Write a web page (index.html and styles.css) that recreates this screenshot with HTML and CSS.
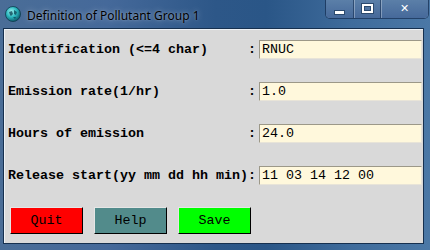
FILE: index.html
```html
<!DOCTYPE html>
<html lang="en">
<head>
<meta charset="UTF-8" />
<title>Definition of Pollutant Group 1</title>
<link rel="stylesheet" href="styles.css">
</head>
<body>

<div class="window">
  <div class="titlebar">
    <svg class="app-icon" width="16" height="16" viewBox="0 0 16 16">
      <defs>
        <radialGradient id="g" cx="0.4" cy="0.35" r="0.7">
          <stop offset="0" stop-color="#9ff3f0"/>
          <stop offset="0.5" stop-color="#2bb7be"/>
          <stop offset="1" stop-color="#0b4f62"/>
        </radialGradient>
      </defs>
      <circle cx="8" cy="8" r="7.5" fill="url(#g)" stroke="#0d3b4c" stroke-width="0.8"/>
      <path d="M4 6 L7 5 L8 8 L6 10 L5 9 Z M9 4 L12 6 L11 9 L9 8 Z M8 11 L11 11 L10 13 Z" fill="#0e4a5a" opacity="0.8"/>
    </svg>
    <span class="title">Definition of Pollutant Group 1</span>
    <div class="controls">
      <div class="ctl min"><span class="bar"></span></div>
      <div class="ctl max"><span class="box"></span></div>
      <div class="ctl close">&#x2715;</div>
    </div>
  </div>

  <div class="client">
    <div class="row">
      <span class="label">Identification (&lt;=4 char)</span>
      <span class="colon">:</span>
      <input class="field" type="text" value="RNUC" />
    </div>
    <div class="row">
      <span class="label">Emission rate(1/hr)</span>
      <span class="colon">:</span>
      <input class="field" type="text" value="1.0" />
    </div>
    <div class="row">
      <span class="label">Hours of emission</span>
      <span class="colon">:</span>
      <input class="field" type="text" value="24.0" />
    </div>
    <div class="row">
      <span class="label">Release start(yy mm dd hh min)</span>
      <span class="colon">:</span>
      <input class="field" type="text" value="11 03 14 12 00" />
    </div>

    <div class="buttons">
      <div class="btn quit">Quit</div>
      <div class="btn help">Help</div>
      <div class="btn save">Save</div>
    </div>
  </div>
</div>

</body>
</html>
```

FILE: styles.css
```css
html, body {
  margin: 0;
  padding: 0;
}
body {
  width: 430px;
  height: 250px;
  overflow: hidden;
}
.window {
  box-sizing: border-box;
  width: 430px;
  height: 250px;
  padding: 0 6px 6px 3px;
  background: linear-gradient(to right, #4a6d97 0%, #45699a 25%, #2d5788 50%, #2a5687 62%, #3f6c9c 82%, #4b78a6 100%);
  display: flex;
  flex-direction: column;
}
.titlebar {
  height: 28px;
  display: flex;
  align-items: flex-start;
  position: relative;
  font-family: "Noto Sans", "Open Sans", sans-serif;
  font-size: 12px;
}
.app-icon {
  margin: 6px 0 0 2px;
}
.title {
  margin: 7px 0 0 6px;
  color: #000;
  text-shadow: 0 0 6px rgba(255, 255, 255, 0.45), 0 0 2px rgba(255, 255, 255, 0.3);
}
.controls {
  position: absolute;
  top: 0;
  right: -5px;
  display: flex;
  height: 18px;
  border: 1px solid rgba(20, 45, 80, 0.7);
  border-top: none;
  border-radius: 0 0 5px 5px;
  box-shadow: inset 0 0 0 1px rgba(255, 255, 255, 0.35);
  overflow: hidden;
}
.ctl {
  display: flex;
  align-items: center;
  justify-content: center;
  background: linear-gradient(#5b7fa8, #46699a);
  color: #fff;
  font-family: "DejaVu Sans", sans-serif;
  font-weight: bold;
  font-size: 11px;
}
.ctl + .ctl {
  border-left: 1px solid rgba(20, 45, 80, 0.6);
  box-shadow: inset 1px 0 0 rgba(255, 255, 255, 0.3);
}
.min { width: 27px; }
.max { width: 26px; }
.close { width: 47px; padding-bottom: 2px; }
.bar {
  width: 9px;
  height: 3px;
  margin-top: 6px;
  background: #fff;
  box-shadow: 0 0 0 1px #2c4a6e;
}
.box {
  width: 7px;
  height: 5px;
  border: 2px solid #fff;
  box-shadow: 0 0 0 1px #2c4a6e, inset 0 0 0 1px #2c4a6e;
  margin-bottom: 2px;
}
.client {
  flex: 1;
  background: #d9d9d9;
  border: 1px solid #16304f;
  box-shadow: inset 1px 1px 0 #eef2f6;
  padding: 11px 1px 0 4px;
  font-family: "Liberation Mono", "Courier New", monospace;
  font-size: 13.33px;
  color: #000;
}
.row {
  display: flex;
  align-items: center;
  height: 19px;
  margin-bottom: 23px;
}
.label {
  flex: none;
  width: 240px;
  font-weight: bold;
  white-space: pre;
}
.colon {
  flex: none;
  width: 8px;
  font-weight: bold;
  text-align: center;
}
.field {
  box-sizing: border-box;
  flex: 1;
  min-width: 0;
  height: 19px;
  margin-left: 3px;
  padding: 0 0 0 2px;
  background: #fff8dc;
  border: 1px solid #e8e4d8;
  border-top-color: #9c9888;
  border-left-color: #9c9888;
  font-family: "Liberation Mono", "Courier New", monospace;
  font-size: 13.33px;
  color: #000;
  outline: none;
}
.buttons {
  display: flex;
  gap: 11px;
  padding-left: 2px;
  margin-top: -1px;
}
.btn {
  box-sizing: border-box;
  width: 73px;
  height: 27px;
  line-height: 25px;
  text-align: center;
  border: 1px solid #000;
  border-top-color: #e6e6e6;
  border-left-color: #e6e6e6;
  cursor: pointer;
}
.quit { background: #ff0000; }
.help { background: #528b8b; }
.save { background: #00ff00; }
```
